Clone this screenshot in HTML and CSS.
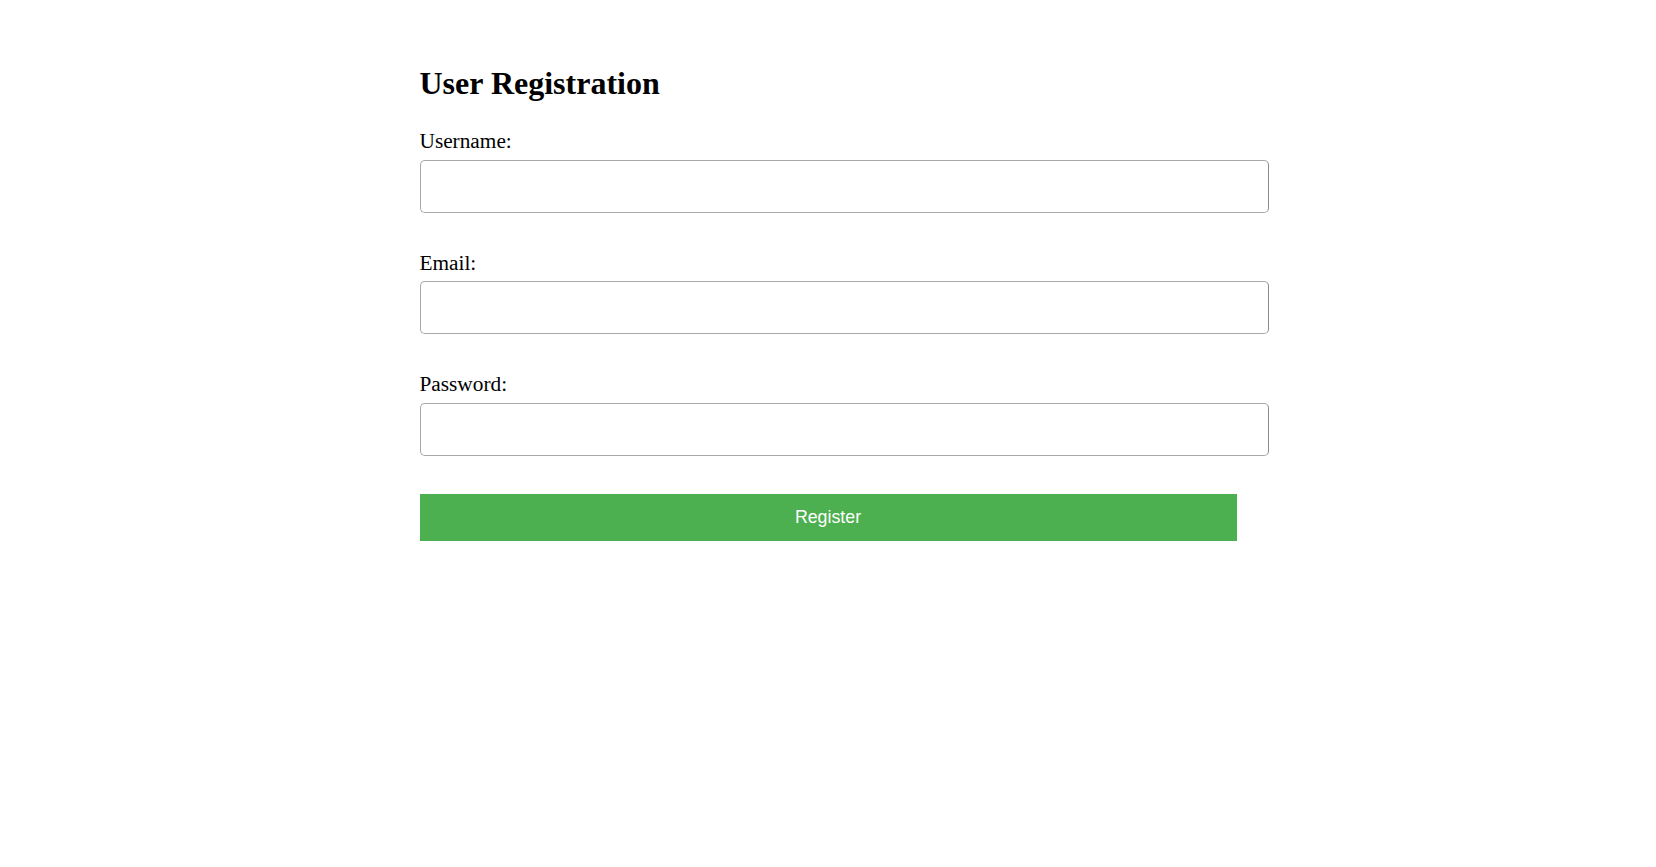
FILE: index.html
```html
<!DOCTYPE html>
<html lang="en">
<head>
<meta charset="utf-8">
<title>User Registration</title>
<link rel="stylesheet" href="styles.css">
</head>
<body>
<main class="page">
  <h1 class="title">User Registration</h1>
  <form class="form">
    <div class="field">
      <label class="label" for="username">Username:</label>
      <input class="input" type="text" id="username">
    </div>
    <div class="field">
      <label class="label" for="email">Email:</label>
      <input class="input" type="email" id="email">
    </div>
    <div class="field">
      <label class="label" for="password">Password:</label>
      <input class="input" type="password" id="password">
    </div>
    <button class="submit" type="button">Register</button>
  </form>
</main>
</body>
</html>
```
FILE: styles.css
```css
html, body {
  margin: 0;
  padding: 0;
  background: #ffffff;
}
body {
  font-family: "Liberation Serif", "Times New Roman", serif;
  color: #000;
}
.page {
  width: 817px;
  margin: 0 auto;
  padding-top: 66px;
}
.title {
  margin: 0 0 28px 0;
  font-size: 32px;
  line-height: 35px;
  font-weight: bold;
}
.form {
  display: flex;
  flex-direction: column;
}
.field {
  display: flex;
  flex-direction: column;
  margin-bottom: 38px;
}
.label {
  font-size: 21.3px;
  line-height: 24px;
  margin-bottom: 6.5px;
}
.input {
  box-sizing: border-box;
  width: 849px;
  height: 53px;
  margin: 0;
  border: 1px solid #a9a9a9;
  border-right-color: #8a8a8a;
  border-radius: 5px;
  background: #fff;
  padding: 0 13px;
  font-size: 17px;
  outline: none;
}
.submit {
  width: 817px;
  height: 47px;
  margin: 0;
  border: none;
  background: #4caf50;
  color: #ffffff;
  font-family: "Liberation Sans", Arial, sans-serif;
  font-size: 17.8px;
  cursor: pointer;
}
```
